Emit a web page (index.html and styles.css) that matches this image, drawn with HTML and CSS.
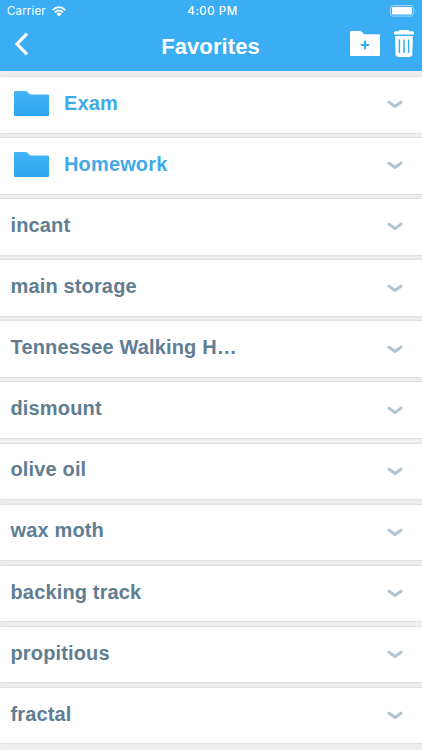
FILE: index.html
```html
<!DOCTYPE html>
<html lang="en">
<head>
    <meta charset="UTF-8">
    <meta name="viewport" content="width=device-width, initial-scale=1.0">
    <title>Favorites</title>
    <link rel="stylesheet" href="styles.css">
</head>
<body>
    <!-- Shared icons -->
    <svg class="icon-defs" aria-hidden="true">
        <defs>
            <linearGradient id="folder-fill" x1="0" y1="0" x2="0" y2="1">
                <stop offset="0" stop-color="#45b3f6"/>
                <stop offset="1" stop-color="#2ea5ef"/>
            </linearGradient>
            <symbol id="folder" viewBox="0 0 35 25">
                <path d="M1 0H11.5Q12.5 0 13.2 .7L15.8 2.9Q16.6 3.5 17.6 3.5H34Q35 3.5 35 4.5V24Q35 25 34 25H1Q0 25 0 24V1Q0 0 1 0Z" fill="url(#folder-fill)"/>
            </symbol>
            <symbol id="chevron" viewBox="0 0 16 9">
                <path d="M2 2.2L8 6.5L14 2.2" fill="none" stroke="#b0c4d2" stroke-width="3" stroke-linecap="round" stroke-linejoin="round"/>
            </symbol>
        </defs>
    </svg>

    <header class="header">
        <div class="status-bar">
            <div class="carrier">
                <span>Carrier</span>
                <svg class="wifi" viewBox="0 0 14 11" aria-hidden="true">
                    <path d="M.7 4.1Q7-1.8 13.3 4.1M2.9 6.3Q7 2.6 11.1 6.3" fill="none" stroke="#fff" stroke-width="1.8"/>
                    <path d="M4.4 7.9Q7 5.7 9.6 7.9L7 10.5Z" fill="#fff"/>
                </svg>
            </div>
            <span class="time">4:00 PM</span>
            <svg class="battery" viewBox="0 0 27 12" aria-hidden="true">
                <rect x=".5" y=".5" width="23" height="10.6" rx="2.5" fill="none" stroke="#fff" stroke-opacity=".5"/>
                <rect x="2" y="2" width="20" height="7.6" rx="1" fill="#fff"/>
                <path d="M25 4Q26.6 5.8 25 7.6Z" fill="#fff" fill-opacity=".6"/>
            </svg>
        </div>
        <div class="nav-bar">
            <button class="back" aria-label="Back">
                <svg viewBox="0 0 15 24"><path d="M13 1.7L3 12L13 22.3" fill="none" stroke="#fff" stroke-width="3.2"/></svg>
            </button>
            <h1>Favorites</h1>
            <div class="actions">
                <button class="new-folder" aria-label="New folder">
                    <svg viewBox="0 0 30 25">
                        <path d="M1 0H9.8Q10.8 0 11.5 .7L13.7 2.8Q14.3 3.3 15.2 3.3H29Q30 3.3 30 4.3V24Q30 25 29 25H1Q0 25 0 24V1Q0 0 1 0Z" fill="#fff"/>
                        <path d="M15 9.7V18.3M10.7 14H19.3" stroke="#3aadf5" stroke-width="2.2"/>
                    </svg>
                </button>
                <button class="trash" aria-label="Delete">
                    <svg viewBox="0 0 20 27">
                        <path d="M5 2V1Q5 0 6 0H14Q15 0 15 1V2Z" fill="#fff"/>
                        <path d="M1.5 1.3H18.5Q20 1.3 20 2.8V4.6H0V2.8Q0 1.3 1.5 1.3Z" fill="#fff"/>
                        <path d="M1.2 6H18.8L18.4 24.3Q18.2 27 15.5 27H4.5Q1.8 27 1.6 24.3Z" fill="#fff"/>
                        <path d="M5.4 9.5V23M10 9.5V23M14.6 9.5V23" stroke="#3aadf5" stroke-width="1.5"/>
                    </svg>
                </button>
            </div>
        </div>
    </header>

    <main class="list">
        <div class="row folder">
            <svg class="folder-icon"><use href="#folder"/></svg>
            <span class="label">Exam</span>
            <svg class="chevron"><use href="#chevron"/></svg>
        </div>
        <div class="row folder">
            <svg class="folder-icon"><use href="#folder"/></svg>
            <span class="label">Homework</span>
            <svg class="chevron"><use href="#chevron"/></svg>
        </div>
        <div class="row">
            <span class="label">incant</span>
            <svg class="chevron"><use href="#chevron"/></svg>
        </div>
        <div class="row">
            <span class="label">main storage</span>
            <svg class="chevron"><use href="#chevron"/></svg>
        </div>
        <div class="row">
            <span class="label">Tennessee Walking H…</span>
            <svg class="chevron"><use href="#chevron"/></svg>
        </div>
        <div class="row">
            <span class="label">dismount</span>
            <svg class="chevron"><use href="#chevron"/></svg>
        </div>
        <div class="row">
            <span class="label">olive oil</span>
            <svg class="chevron"><use href="#chevron"/></svg>
        </div>
        <div class="row">
            <span class="label">wax moth</span>
            <svg class="chevron"><use href="#chevron"/></svg>
        </div>
        <div class="row">
            <span class="label">backing track</span>
            <svg class="chevron"><use href="#chevron"/></svg>
        </div>
        <div class="row">
            <span class="label">propitious</span>
            <svg class="chevron"><use href="#chevron"/></svg>
        </div>
        <div class="row">
            <span class="label">fractal</span>
            <svg class="chevron"><use href="#chevron"/></svg>
        </div>
    </main>
</body>
</html>
```

FILE: styles.css
```css
:root {
    --blue: #3aadf5;
    --slate: #607d92;
    --gap-color: #efefef;
}

* {
    box-sizing: border-box;
}

body {
    margin: 0;
    height: 750px;
    overflow: hidden;
    background: var(--gap-color);
    font-family: "Liberation Sans", Arial, sans-serif;
}

svg {
    display: block;
}

.icon-defs {
    position: absolute;
    width: 0;
    height: 0;
}

button {
    padding: 0;
    border: none;
    background: none;
}

.header {
    height: 71px;
    background: var(--blue);
    color: #fff;
}

.status-bar {
    display: grid;
    grid-template-columns: 1fr auto 1fr;
    align-items: center;
    height: 22px;
    padding: 0 5px 0 7px;
    font-family: Inter, sans-serif;
    font-size: 11.5px;
}

.carrier {
    display: flex;
    align-items: center;
    gap: 6px;
    letter-spacing: 0.15px;
}

.wifi {
    width: 14px;
    height: 11px;
}

.time {
    font-weight: 500;
    letter-spacing: 0.5px;
    margin-left: 1px;
}

.battery {
    justify-self: end;
    width: 27px;
    height: 12px;
}

.nav-bar {
    display: grid;
    grid-template-columns: 1fr auto 1fr;
    align-items: center;
    height: 49px;
    padding: 0 8px 0 14px;
}

.back svg {
    width: 15px;
    height: 24px;
    margin-bottom: 6px;
}

.nav-bar h1 {
    margin: 0 0 0 -7px;
    font-size: 22px;
    line-height: 26px;
    font-weight: bold;
    letter-spacing: 0.1px;
}

.actions {
    display: flex;
    justify-content: flex-end;
    gap: 14px;
    margin-bottom: 7px;
}

.new-folder svg {
    width: 30px;
    height: 25px;
}

.trash svg {
    width: 20px;
    height: 27px;
}

.list {
    display: flex;
    flex-direction: column;
    gap: 5.6px;
    padding-top: 6px;
}

.row {
    display: flex;
    flex: none;
    align-items: center;
    height: 55.5px;
    padding: 0 19px 0 10.5px;
    background: #fff;
    box-shadow: 0 0 2px rgba(0, 0, 0, 0.22);
    color: var(--slate);
}

.row.folder {
    padding-left: 14px;
    color: #42a9e9;
}

.folder-icon {
    width: 35px;
    height: 25px;
    margin-right: 15px;
    margin-bottom: 2px;
}

.label {
    flex: 1;
    font-size: 20px;
    line-height: 24px;
    font-weight: bold;
    letter-spacing: 0.15px;
    white-space: nowrap;
    margin-bottom: 4px;
}

.chevron {
    width: 16px;
    height: 9px;
}
```
